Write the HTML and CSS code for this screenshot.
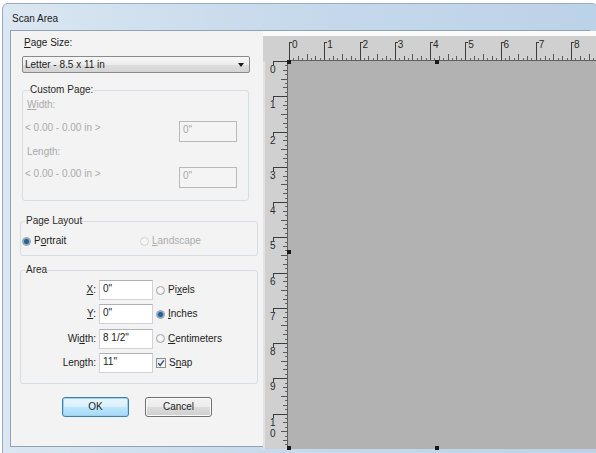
FILE: index.html
```html
<!DOCTYPE html>
<html>
<head>
    <title>Scan Area</title>
    <link rel="stylesheet" href="styles.css">
</head>
<body>
    <div class="window">
        <div class="titlebar">Scan Area</div>
        <div class="client">
            <div class="settings">
                <div class="field-title"><u>P</u>age Size:</div>
                <div class="combo">
                    <span>Letter - 8.5 x 11 in</span>
                    <span class="arrow"></span>
                </div>

                <fieldset class="group custom">
                    <legend>Custom Page:</legend>
                    <div class="dim-label"><u>W</u>idth:</div>
                    <div class="range-row">
                        <span>&lt; 0.00 - 0.00 in &gt;</span>
                        <div class="input disabled">0"</div>
                    </div>
                    <div class="dim-label gap">Length:</div>
                    <div class="range-row second">
                        <span>&lt; 0.00 - 0.00 in &gt;</span>
                        <div class="input disabled">0"</div>
                    </div>
                </fieldset>

                <fieldset class="group layout">
                    <legend>Page Layout</legend>
                    <div class="radio-row">
                        <label class="option first"><span class="radio checked"></span><span>P<u>o</u>rtrait</span></label>
                        <label class="option off"><span class="radio"></span><span><u>L</u>andscape</span></label>
                    </div>
                </fieldset>

                <fieldset class="group area">
                    <legend>Area</legend>
                    <div class="area-grid">
                        <span class="field-label"><u>X</u>:</span>
                        <div class="input">0"</div>
                        <label class="option"><span class="radio"></span><span>Pi<u>x</u>els</span></label>

                        <span class="field-label"><u>Y</u>:</span>
                        <div class="input">0"</div>
                        <label class="option"><span class="radio checked"></span><span><u>I</u>nches</span></label>

                        <span class="field-label">Wi<u>d</u>th:</span>
                        <div class="input">8 1/2"</div>
                        <label class="option"><span class="radio"></span><span><u>C</u>entimeters</span></label>

                        <span class="field-label">Length:</span>
                        <div class="input">11"</div>
                        <label class="option"><span class="checkbox"><svg viewBox="0 0 10 10" width="10" height="10"><path d="M2.2 5.2 L4.2 7.3 L7.9 2.4" fill="none" stroke="#2b4d7e" stroke-width="1.4"/></svg></span><span>S<u>n</u>ap</span></label>
                    </div>
                </fieldset>

                <div class="buttons">
                    <button class="btn default">OK</button>
                    <button class="btn">Cancel</button>
                </div>
            </div>

            <div class="preview">
                <div class="corner"></div>
                <div class="ruler-top">
                    <span>0</span><span>1</span><span>2</span><span>3</span><span>4</span><span>5</span><span>6</span><span>7</span><span>8</span>
                </div>
                <div class="ruler-left">
                    <span>0</span><span>1</span><span>2</span><span>3</span><span>4</span><span>5</span><span>6</span><span>7</span><span>8</span><span>9</span><span>1<br>0</span>
                </div>
                <div class="page">
                    <i class="handle tl"></i>
                    <i class="handle tm"></i>
                    <i class="handle tr"></i>
                    <i class="handle ml"></i>
                    <i class="handle mr"></i>
                    <i class="handle bl"></i>
                    <i class="handle bm"></i>
                    <i class="handle br"></i>
                </div>
            </div>
        </div>
    </div>
</body>
</html>
```

FILE: styles.css
```css
* {
    box-sizing: border-box;
}
html, body {
    overflow: hidden;
}
body {
    margin: 0;
    padding: 3px 0 0 2px;
    background: #fff;
    font-family: "Liberation Sans", Arial, sans-serif;
    font-size: 10px;
    line-height: 12px;
    color: #222;
}
.window {
    width: 596px;
    height: 452px;
    padding: 0 7px 0 7px;
    border: 1px solid #97acc2;
    border-radius: 6px 6px 0 0;
    background: linear-gradient(to right, #dbe7f2, #c9dbec 40%, #bcd2e8);
}
.titlebar {
    height: 26px;
    padding: 9px 0 0 2px;
    color: #1b1b1b;
}
.client {
    display: flex;
    height: 417px;
    border: 1px solid #8fa2b6;
    background: #f1f1f1;
}

/* left side */
.settings {
    width: 252px;
    flex: none;
    padding: 6px 5px 0 9px;
    background: #f3f3f3;
}
.field-title {
    margin-left: 4px;
}
.combo {
    display: flex;
    align-items: center;
    justify-content: space-between;
    width: 228px;
    height: 17px;
    margin: 7px 0 0 2px;
    padding: 0 5px 0 2px;
    border: 1px solid #8a8a8a;
    border-radius: 2px;
    background: linear-gradient(#f7f7f7, #ececec 50%, #dedede 51%, #d3d3d3);
}
.arrow {
    width: 0;
    height: 0;
    border-left: 3px solid transparent;
    border-right: 3px solid transparent;
    border-top: 4px solid #1a1a1a;
}
.group {
    margin: 0;
    border: 1px solid #d6dde3;
    border-radius: 3px;
}
.group legend {
    padding: 0;
    color: #2a2a2a;
}
.custom {
    width: 227px;
    margin: 11px 0 0 2px;
    padding: 3px 11px 12px 2px;
}
.custom legend {
    margin-left: 5px;
}
.dim-label {
    padding-left: 2px;
    color: #a9a9a9;
}
.dim-label.gap {
    margin-top: 4px;
}
.range-row {
    display: flex;
    justify-content: space-between;
    align-items: flex-start;
    height: 21px;
    margin-top: 10px;
    color: #ababab;
}
.range-row.second {
    margin-top: 9px;
}
.range-row span {
    margin-top: 1px;
}
.input {
    width: 54px;
    height: 20px;
    padding: 2px 0 0 3px;
    border: 1px solid #cfd3d8;
    border-top-color: #aeb2b8;
    background: #fff;
    color: #222;
}
.input.disabled {
    width: 58px;
    height: 21px;
    border-color: #b9b9b9;
    background: #f4f4f4;
    color: #a8a8a8;
}
.layout {
    width: 238px;
    margin-top: 14px;
    padding: 7px 4px 7px 1px;
}
.layout legend,
.area legend {
    margin-left: 4px;
}
.radio-row {
    display: flex;
    align-items: center;
    height: 14px;
}
.option {
    display: flex;
    align-items: center;
    gap: 3px;
}
.option.first {
    width: 118px;
}
.option.off {
    color: #acacac;
}
.radio {
    width: 9px;
    height: 9px;
    border-radius: 50%;
    border: 1px solid #a5a5a5;
    background: radial-gradient(circle at 40% 40%, #fff, #e1e1e1);
}
.radio.checked {
    border-color: #8a9bad;
    background: radial-gradient(circle, #2f5f8c 0 2px, #7fa4c6 3px, #eef2f6 4px);
}
.option.off .radio {
    border-color: #d2d2d2;
    background: #f5f5f5;
}
.checkbox {
    width: 10px;
    height: 10px;
    border: 1px solid #8e8f8f;
    background: linear-gradient(135deg, #e2e4e7, #fdfdfd);
    display: flex;
}
.checkbox svg {
    margin: -1px;
}
.area {
    width: 238px;
    margin-top: 8px;
    padding: 4px 4px 10px 1px;
}
.area-grid {
    display: grid;
    grid-template-columns: 74px 54px 1fr;
    grid-auto-rows: 20px;
    column-gap: 3px;
    row-gap: 4.33px;
    align-items: center;
}
.field-label {
    text-align: right;
}
.buttons {
    display: flex;
    gap: 16px;
    margin-top: 13px;
    padding-left: 42px;
}
.btn {
    width: 67px;
    height: 20px;
    padding: 0;
    font-family: inherit;
    font-size: 10px;
    color: #1e1e1e;
    border: 1px solid #707070;
    border-radius: 3px;
    background: linear-gradient(#f3f3f3, #ebebeb 50%, #dcdcdc 51%, #cfcfcf);
    box-shadow: inset 0 0 0 1px #fbfbfb;
}
.btn.default {
    border-color: #3c7fb1;
    background: linear-gradient(#eaf6fd, #d9f0fc 50%, #bee6fd 51%, #a7d9f5);
    box-shadow: inset 0 0 0 1px #9fd0ee;
}

/* right side: rulers and page */
.preview {
    flex: 1;
    display: grid;
    grid-template-columns: 25px 1fr;
    grid-template-rows: 25px 1fr;
    padding-top: 5px;
    background: linear-gradient(#fbfbfb 0 5px, #ececec 5px);
}
.corner {
    background: #d0d0d0;
}
.ruler-top {
    display: flex;
    padding-left: 1px;
    color: #2a2a2a;
    background-color: #d0d0d0;
    background-image:
        linear-gradient(#5e5e5e, #5e5e5e),
        repeating-linear-gradient(to right, transparent 0 1px, #3c3c3c 1px 4px, transparent 4px 35.25px),
        repeating-linear-gradient(to right, transparent 0 1px, #3c3c3c 1px 2px, transparent 2px 35.25px),
        repeating-linear-gradient(to right, transparent 0 1px, #555 1px 2px, transparent 2px 17.625px),
        repeating-linear-gradient(to right, transparent 0 1px, #5a5a5a 1px 2px, transparent 2px 8.8125px),
        repeating-linear-gradient(to right, transparent 0 1px, #666 1px 2px, transparent 2px 4.40625px);
    background-size: 100% 1px, 100% 1px, 100% 19px, 100% 7px, 100% 5px, 100% 3px;
    background-position: left bottom, left 0 bottom 18px, left bottom, left bottom, left bottom, left bottom;
    background-repeat: no-repeat;
}
.ruler-top span {
    flex: none;
    width: 35.25px;
    padding: 3px 0 0 3px;
}
.ruler-left {
    display: flex;
    flex-direction: column;
    color: #2a2a2a;
    border-left: 2px solid #e2e2e2;
    background-color: #d0d0d0;
    background-image:
        linear-gradient(#5e5e5e, #5e5e5e),
        repeating-linear-gradient(to bottom, #3c3c3c 0 4px, transparent 4px 35.25px),
        repeating-linear-gradient(to bottom, #3c3c3c 0 1px, transparent 1px 35.25px),
        repeating-linear-gradient(to bottom, #555 0 1px, transparent 1px 17.625px),
        repeating-linear-gradient(to bottom, #5a5a5a 0 1px, transparent 1px 8.8125px),
        repeating-linear-gradient(to bottom, #666 0 1px, transparent 1px 4.40625px);
    background-size: 1px 100%, 1px 100%, 15px 100%, 7px 100%, 5px 100%, 3px 100%;
    background-position: right top, right 14px top, right top, right top, right top, right top;
    background-repeat: no-repeat;
}
.ruler-left span {
    flex: none;
    height: 35.25px;
    padding: 3px 0 0 5px;
    line-height: 11px;
}
.page {
    position: relative;
    margin-right: 3px;
    background: #b2b2b2;
}
.handle {
    position: absolute;
    width: 4px;
    height: 4px;
    background: #1a1a1a;
}
.tl { left: -1px; top: -1px; }
.tm { left: 147px; top: -1px; }
.tr { right: -1px; top: -1px; }
.ml { left: -1px; top: 189px; }
.mr { right: -1px; top: 189px; }
.bl { left: -1px; bottom: -1px; }
.bm { left: 147px; bottom: -1px; }
.br { right: -1px; bottom: -1px; }
```
